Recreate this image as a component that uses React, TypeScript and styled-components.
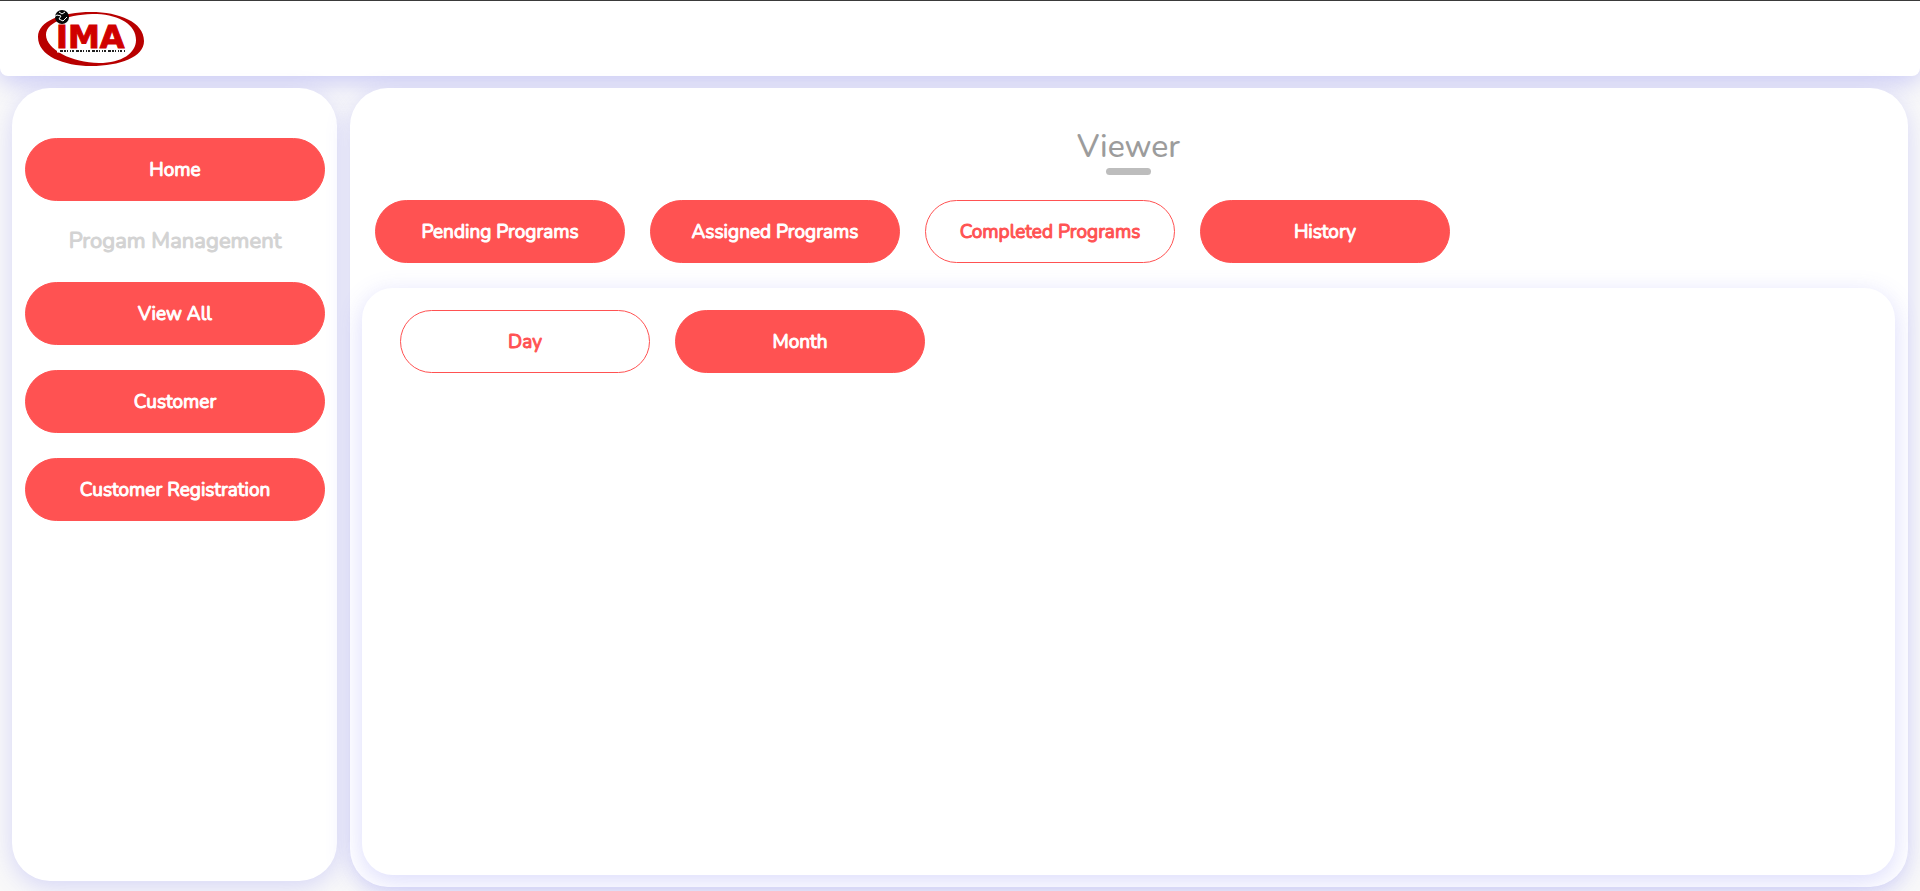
import React, { useState } from "react";
import styled, { createGlobalStyle } from "styled-components";

const GlobalStyle = createGlobalStyle`
  *, *::before, *::after { box-sizing: border-box; }
  body {
    margin: 0;
    background: #f9f9f9;
    font-family: "Nunito", "Lato", "Liberation Sans", sans-serif;
  }
`;

const Page = styled.div`
  min-height: 100vh;
  overflow: hidden;
`;

const Header = styled.header`
  display: flex;
  align-items: center;
  height: 76px;
  padding: 0 37px;
  border-top: 1px solid #3a3a3a;
  border-radius: 0 0 8px 8px;
  background: #fff;
  box-shadow: 0 6px 24px rgba(90, 90, 240, 0.3);
`;

const LogoLink = styled.a`
  display: block;
  height: 58px;
`;

const Layout = styled.div`
  display: flex;
  align-items: flex-start;
  gap: 13px;
  padding: 12px 12px 4px;
`;

const Panel = styled.div`
  border-radius: 38px;
  background: #fff;
  box-shadow: 0 6px 25px rgba(90, 90, 240, 0.22);
`;

const Sidebar = styled(Panel).attrs({ as: "nav" })`
  display: flex;
  flex-direction: column;
  flex: 0 0 325px;
  gap: 25px;
  min-height: calc(100vh - 98px);
  padding: 50px 12px 24px 13px;
`;

const SidebarHeading = styled.h2`
  margin: 0;
  color: #d3d3d3;
  font-size: 22px;
  font-weight: 400;
  line-height: 31px;
  text-align: center;
  -webkit-text-stroke: 1px currentColor;
`;

const Main = styled(Panel).attrs({ as: "main" })`
  display: flex;
  flex-direction: column;
  flex: 1;
  min-width: 0;
  min-height: calc(100vh - 92px);
  padding: 37px 13px 12px 12px;
`;

const Title = styled.h1`
  display: flex;
  flex-direction: column;
  align-items: center;
  margin: 0 0 25px;
  color: #9c9c9c;
  font-size: 32px;
  font-weight: 500;
  line-height: 43px;

  &::after {
    content: "";
    width: 45px;
    height: 7px;
    border-radius: 4px;
    background: #bdbdbd;
  }
`;

const ButtonRow = styled.div<{ $inset?: boolean }>`
  display: flex;
  flex-wrap: wrap;
  gap: 25px;
  padding: 0 ${(p) => (p.$inset ? 38 : 13)}px;
`;

const PillButton = styled.button<{ $selected?: boolean; $wide?: boolean }>`
  width: ${(p) => (p.$wide ? "100%" : "250px")};
  height: 63px;
  padding: 0 12px;
  border: 1px solid #ff5252;
  border-radius: 32px;
  background: ${(p) => (p.$selected ? "#fff" : "#ff5252")};
  color: ${(p) => (p.$selected ? "#ff5252" : "#fff")};
  font-family: inherit;
  font-size: 19px;
  font-weight: 400;
  -webkit-text-stroke: 1px currentColor;
  cursor: pointer;
`;

const Results = styled(Panel).attrs({ as: "section" })`
  flex: 1;
  margin-top: 25px;
  padding: 22px 0;
  border-radius: 31px;
`;

const Logo = () => (
  <svg width="108" height="58" viewBox="0 0 108 58" role="img" aria-label="IMA">
    <path
      fill="#b80000"
      fillRule="evenodd"
      d="M54 2C82 2 107 12 107 31C107 47 83 56 54 56C27 56 1 46 1 27C1 11 25 2 54 2ZM60 4C34 4 9 11 9 25C9 39 35 53 62 53C85 53 99 43 99 30C99 15 83 5 60 4Z"
    />
    <text
      x="19"
      y="38"
      fill="#d00000"
      stroke="#d00000"
      strokeWidth="1"
      fontFamily="DejaVu Sans, Liberation Sans, sans-serif"
      fontSize="32"
      fontWeight="700"
    >
      IMA
    </text>
    <path d="M20 41H90" stroke="#fff" strokeWidth="3" />
    <path
      d="M23 41H88"
      stroke="#222"
      strokeWidth="2"
      strokeDasharray="3 1 2 1 1 2 1 1 2 2"
    />
    <circle cx="25" cy="7" r="7" fill="#080808" />
    <path d="M17 7L20 5L24 6L22 9L26 11L30 7" fill="none" stroke="#fff" strokeWidth="1" />
    <path d="M22 2L25 4L28 2" fill="none" stroke="#fff" strokeWidth="1" />
  </svg>
);

const programTabs = ["Pending Programs", "Assigned Programs", "Completed Programs", "History"];
const periodTabs = ["Day", "Month"];

export default function App() {
  const [program, setProgram] = useState("Completed Programs");
  const [period, setPeriod] = useState("Day");

  return (
    <>
      <GlobalStyle />
      <Page>
        <Header>
          <LogoLink href="#">
            <Logo />
          </LogoLink>
        </Header>
        <Layout>
          <Sidebar>
            <PillButton $wide>Home</PillButton>
            <SidebarHeading>Progam Management</SidebarHeading>
            <PillButton $wide>View All</PillButton>
            <PillButton $wide>Customer</PillButton>
            <PillButton $wide>Customer Registration</PillButton>
          </Sidebar>
          <Main>
            <Title>Viewer</Title>
            <ButtonRow>
              {programTabs.map((name) => (
                <PillButton key={name} $selected={name === program} onClick={() => setProgram(name)}>
                  {name}
                </PillButton>
              ))}
            </ButtonRow>
            <Results>
              <ButtonRow $inset>
                {periodTabs.map((name) => (
                  <PillButton key={name} $selected={name === period} onClick={() => setPeriod(name)}>
                    {name}
                  </PillButton>
                ))}
              </ButtonRow>
            </Results>
          </Main>
        </Layout>
      </Page>
    </>
  );
}
